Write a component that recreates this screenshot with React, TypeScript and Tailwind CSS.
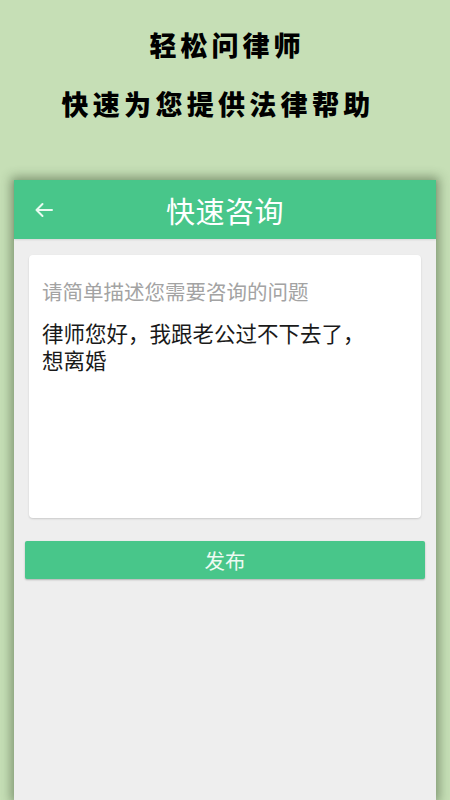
import React from "react";

const font = { fontFamily: '"Noto Sans CJK SC", "Noto Sans", sans-serif' };

export default function App() {
  return (
    <div
      className="w-[450px] h-[800px] bg-[#c6dfb6] flex flex-col overflow-hidden"
      style={font}
    >
      <div className="pt-[28px] flex flex-col items-center">
        <div className="text-[27px] leading-[34px] font-black text-black tracking-[4px] pl-[4px]">
          轻松问律师
        </div>
        <div className="mt-[25px] text-[27px] leading-[34px] font-black text-black tracking-[4.3px] pr-[14px]">
          快速为您提供法律帮助
        </div>
      </div>
      <div className="mt-[59px] mx-[14px] flex-1 bg-[#eeeeee] flex flex-col shadow-[0_0_10px_3px_rgba(40,60,30,0.45)]">
        <div className="h-[59px] bg-[#48c68a] flex items-center relative shadow-[0_1px_2px_rgba(0,0,0,0.1)]">
          <svg
            className="absolute left-[20px] top-[21px]"
            width="20"
            height="18"
            viewBox="0 0 20 18"
            fill="none"
            stroke="#eafaf1"
            strokeWidth="2"
            strokeLinecap="round"
            strokeLinejoin="round"
          >
            <path d="M18 9H2.5M8.5 3L2.5 9L8.5 15" />
          </svg>
          <div className="flex-1 text-center text-white text-[29px] leading-[36px] tracking-[0.5px]">
            快速咨询
          </div>
        </div>
        <div className="mt-[16px] mx-[15px] h-[263px] bg-white rounded-[4px] shadow-[0_1px_2px_rgba(0,0,0,0.15)] px-[13px] pt-[22px]">
          <div className="text-[20.5px] leading-[28px] text-[#a3a3a3]">
            请简单描述您需要咨询的问题
          </div>
          <div className="mt-[14px] text-[21.5px] leading-[27px] text-[#1a1a1a]">
            <div>律师您好，我跟老公过不下去了，</div>
            <div>想离婚</div>
          </div>
        </div>
        <div className="mt-[23px] mx-[11px] h-[38px] bg-[#48c68a] rounded-[2px] shadow-[0_1px_2px_rgba(0,0,0,0.25)] flex items-center justify-center text-[20.5px] text-[#eefaf2]">
          发布
        </div>
      </div>
    </div>
  );
}
